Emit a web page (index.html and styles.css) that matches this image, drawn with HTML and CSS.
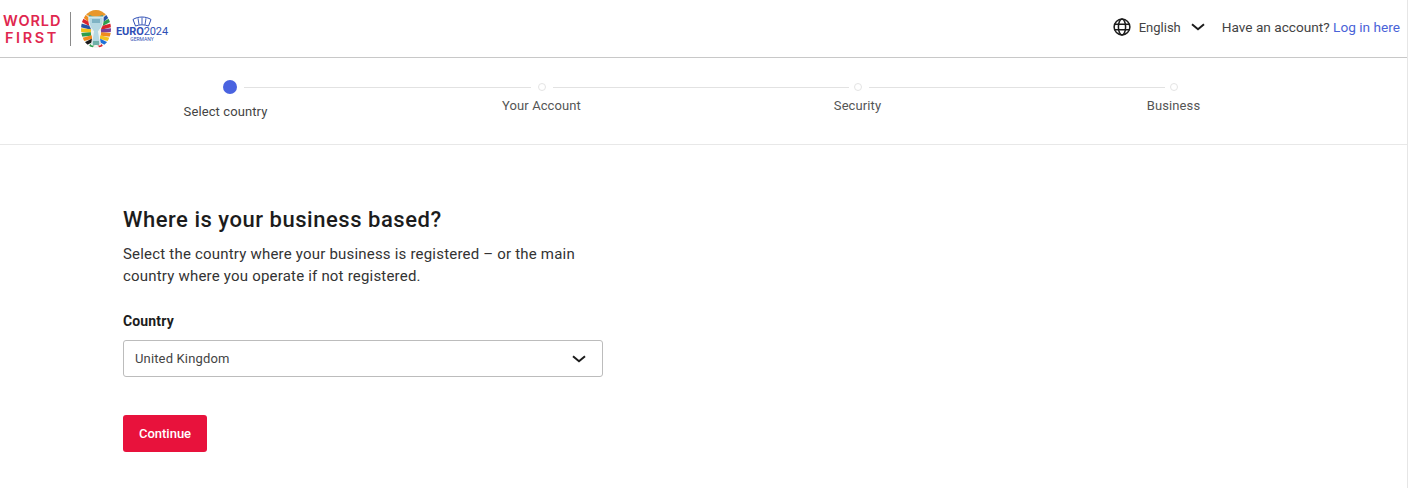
FILE: index.html
```html
<!DOCTYPE html>
<html lang="en">
<head>
  <meta charset="UTF-8">
  <meta name="viewport" content="width=device-width, initial-scale=1.0">
  <title>WorldFirst - Sign up</title>
  <link rel="stylesheet" href="styles.css">
</head>
<body>

  <div class="page">
    <header class="topbar">
      <div class="brand">
        <div class="brand-name">
          <div class="brand-world">WORLD</div>
          <div class="brand-first">FIRST</div>
        </div>
        <span class="brand-rule"></span>
        <svg class="trophy" width="30" height="38" viewBox="0 0 30 38">
          <defs>
            <clipPath id="egg"><ellipse cx="15" cy="19" rx="15" ry="19"/></clipPath>
          </defs>
          <g clip-path="url(#egg)" fill="none" stroke-width="3.6">
            <rect width="30" height="38" fill="#f2f2ee" stroke="none"/>
            <path d="M4 -1 C8 5 22 5 26 -1" stroke="#e8972a" stroke-width="7"/>
            <path d="M8 6 C12 8 18 8 22 6" stroke="#3a9d8f" stroke-width="2"/>
            <path d="M10 12 L0 3" stroke="#f08a1d"/>
            <path d="M10 15 L-1 9" stroke="#d9232e"/>
            <path d="M10 18 L-1 15" stroke="#2554a5"/>
            <path d="M10 21 L-1 20" stroke="#f4c21c"/>
            <path d="M10 24 L-1 25" stroke="#2e9e4f"/>
            <path d="M11 27 L0 30" stroke="#f08a1d"/>
            <path d="M12 30 L2 35" stroke="#1a1a1a"/>
            <path d="M13 33 L7 40" stroke="#2e9e4f"/>
            <path d="M20 12 L30 3" stroke="#2554a5"/>
            <path d="M20 15 L31 9" stroke="#2e9e4f"/>
            <path d="M20 18 L31 15" stroke="#d9232e"/>
            <path d="M20 21 L31 20" stroke="#7a3f98"/>
            <path d="M20 24 L31 25" stroke="#f08a1d"/>
            <path d="M19 27 L30 30" stroke="#f4c21c"/>
            <path d="M18 30 L28 35" stroke="#1d6fd8"/>
            <path d="M17 33 L23 40" stroke="#d9232e"/>
          </g>
          <path d="M8 7 H22 C23 14 20 19 17.5 21 L19.5 35 H10.5 L12.5 21 C10 19 7 14 8 7Z" fill="#b5d8e2" stroke="#f4f4f0" stroke-width="1"/>
          <path d="M11 9 H19 V13 H11Z" fill="#7fb3c4"/>
          <path d="M12 31 H18 V35 H12Z" fill="#6fb0a8"/>
        </svg>
        <div class="euro">
          <svg class="uefa" width="20" height="11" viewBox="0 0 20 11" fill="none" stroke="#2f4fb5">
            <path d="M1 3.5 C6 0.2 14 0.2 19 3.5 L16.5 10 C12 8.4 8 8.4 3.5 10Z" stroke-width="1"/>
            <path d="M6 2.2 L7 8.8 M10 1.6 V8.4 M14 2.2 L13 8.8" stroke-width="0.9"/>
          </svg>
          <div class="euro-title"><b>EURO</b>2024</div>
          <div class="euro-sub">GERMANY</div>
        </div>
      </div>
      <div class="top-right">
        <svg class="globe" width="18" height="18" viewBox="0 0 18 18" fill="none" stroke="#1c1c1c" stroke-width="1.5">
          <circle cx="9" cy="9" r="7.9"/>
          <ellipse cx="9" cy="9" rx="3.6" ry="7.9"/>
          <path d="M1.6 6.3 H16.4 M1.6 11.7 H16.4"/>
        </svg>
        <span class="lang">English</span>
        <svg class="chev lang-chev" width="14" height="8" viewBox="0 0 14 8" fill="none" stroke="#1c1c1c" stroke-width="2">
          <path d="M1 1.2 L7 6.2 L13 1.2"/>
        </svg>
        <span class="account">Have an account? <a href="#">Log in here</a></span>
      </div>
    </header>

    <nav class="steps">
      <div class="step step-active">
        <div class="step-track"><span class="dot"></span><span class="line"></span></div>
        <div class="step-label">Select country</div>
      </div>
      <div class="step">
        <div class="step-track"><span class="dot"></span><span class="line"></span></div>
        <div class="step-label">Your Account</div>
      </div>
      <div class="step">
        <div class="step-track"><span class="dot"></span><span class="line"></span></div>
        <div class="step-label">Security</div>
      </div>
      <div class="step step-last">
        <div class="step-track"><span class="dot"></span></div>
        <div class="step-label">Business</div>
      </div>
    </nav>

    <main class="content">
      <h1>Where is your business based?</h1>
      <p class="lead">Select the country where your business is registered – or the main country where you operate if not registered.</p>
      <div class="field-label">Country</div>
      <div class="select">
        <span>United Kingdom</span>
        <svg class="chev" width="14" height="8" viewBox="0 0 14 8" fill="none" stroke="#1c1c1c" stroke-width="2">
          <path d="M1 1.2 L7 6.2 L13 1.2"/>
        </svg>
      </div>
      <button class="continue-btn">Continue</button>
    </main>
  </div>

</body>
</html>
```

FILE: styles.css
```css
* {
  margin: 0;
  padding: 0;
  box-sizing: border-box;
}

html, body {
  height: 100%;
  overflow: hidden;
}

body {
  font-family: Roboto, Arial, sans-serif;
  background-color: #fff;
  color: #333;
}

.page {
  width: 1408px;
  height: 488px;
  border-right: 1px solid #e6e6e6;
}

.topbar {
  height: 58px;
  display: flex;
  align-items: center;
  justify-content: space-between;
  padding: 0 7px 0 3px;
  border-bottom: 1px solid #c8c8c8;
}

.brand {
  display: flex;
  align-items: center;
}

.brand-name {
  width: 58px;
  font-family: "Inter", Roboto, sans-serif;
  font-weight: 600;
  font-size: 14.5px;
  line-height: 17px;
  color: #e0274f;
  text-align: center;
}

.brand-world {
  letter-spacing: 0.9px;
}

.brand-first {
  letter-spacing: 2.6px;
}

.brand-rule {
  width: 1px;
  height: 34px;
  margin: 0 10px 0 9px;
  background-color: #8a8a8a;
}

.trophy {
  display: block;
}

.euro {
  margin-left: 5px;
  display: flex;
  flex-direction: column;
  align-items: center;
  color: #2f4fb5;
}

.uefa {
  display: block;
}

.euro-title {
  font-size: 11px;
  line-height: 9px;
  letter-spacing: -0.1px;
}

.euro-sub {
  margin-top: 1px;
  font-size: 5px;
  line-height: 5px;
}

.top-right {
  display: flex;
  align-items: center;
  padding-bottom: 3px;
  font-size: 13.65px;
  color: #444;
}

.lang {
  margin-left: 8px;
  font-size: 13px;
}

.lang-chev {
  margin-left: 10px;
}

.account {
  margin-left: 17px;
}

.account a {
  color: #4a63d8;
  text-decoration: none;
}

.steps {
  height: 87px;
  display: flex;
  padding-left: 173px;
  border-bottom: 1px solid #e8e8e8;
}

.step {
  width: 316px;
  margin-top: 24px;
}

.step-last {
  width: 105px;
}

.step-track {
  display: flex;
  align-items: center;
  height: 10px;
  padding-left: 49px;
}

.dot {
  width: 8px;
  height: 8px;
  border: 1.5px solid #e4e4e4;
  border-radius: 50%;
  flex-shrink: 0;
}

.line {
  height: 1px;
  flex: 1;
  margin-left: 7px;
  margin-right: -44px;
  background-color: #e2e2e2;
}

.step-active .dot {
  width: 14px;
  height: 14px;
  border: none;
  background-color: #4a63e0;
}

.step-active .step-track {
  padding-left: 50px;
}

.step-active .line {
  margin-right: -42px;
}

.step-label {
  margin-top: 5px;
  width: 105px;
  font-size: 13px;
  line-height: 18px;
  letter-spacing: 0.1px;
  text-align: center;
  color: #555;
}

.step-active .step-label {
  margin-top: 11px;
  color: #444;
}

.content {
  padding: 62px 0 0 123px;
}

h1 {
  font-size: 22px;
  font-weight: 500;
  line-height: 26px;
  letter-spacing: 0.53px;
  color: #1c1c1c;
}

.lead {
  margin-top: 10px;
  width: 480px;
  font-size: 15px;
  line-height: 22px;
  letter-spacing: 0.2px;
  color: #333;
}

.field-label {
  margin-top: 25px;
  font-size: 14px;
  font-weight: 700;
  line-height: 18px;
  letter-spacing: 0.15px;
  color: #1c1c1c;
}

.select {
  margin-top: 10px;
  width: 480px;
  height: 37px;
  display: flex;
  align-items: center;
  justify-content: space-between;
  padding: 0 16px 0 11px;
  border: 1px solid #bcbcbc;
  border-radius: 3px;
  font-size: 13px;
  letter-spacing: 0.15px;
  color: #444;
}

.continue-btn {
  display: block;
  margin-top: 38px;
  width: 84px;
  height: 37px;
  background-color: #e8123c;
  color: #fff;
  font-family: Roboto, Arial, sans-serif;
  font-size: 13px;
  font-weight: 500;
  border: none;
  border-radius: 3px;
  cursor: pointer;
}
```
